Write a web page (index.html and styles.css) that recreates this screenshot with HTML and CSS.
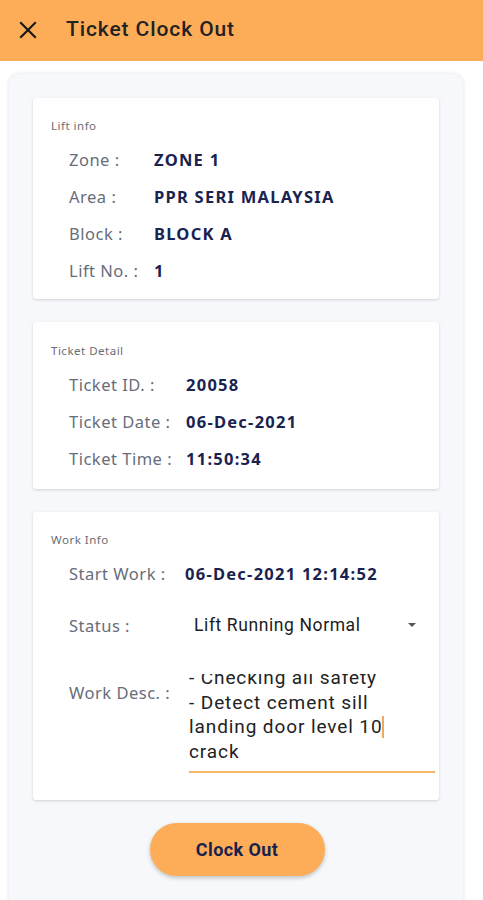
FILE: index.html
```html
<!DOCTYPE html>
<html>
<head>
<meta charset="utf-8">
<link rel="stylesheet" href="styles.css">
</head>
<body>
<header class="appbar">
  <svg class="close" width="18" height="18" viewBox="0 0 18 18"><path d="M2 2 L16 16 M16 2 L2 16" stroke="#1a1a1a" stroke-width="2.2" stroke-linecap="square" fill="none"/></svg>
  <span class="title">Ticket Clock Out</span>
</header>
<main class="sheet">
  <section class="card card-lift">
    <div class="card-label">Lift info</div>
    <div class="row"><span class="key">Zone :</span><span class="val">ZONE 1</span></div>
    <div class="row"><span class="key">Area :</span><span class="val">PPR SERI MALAYSIA</span></div>
    <div class="row"><span class="key">Block :</span><span class="val">BLOCK A</span></div>
    <div class="row"><span class="key">Lift No. :</span><span class="val">1</span></div>
  </section>
  <section class="card card-ticket">
    <div class="card-label">Ticket Detail</div>
    <div class="row"><span class="key">Ticket ID. :</span><span class="val">20058</span></div>
    <div class="row"><span class="key">Ticket Date :</span><span class="val">06-Dec-2021</span></div>
    <div class="row"><span class="key">Ticket Time :</span><span class="val">11:50:34</span></div>
  </section>
  <section class="card card-work">
    <div class="card-label">Work Info</div>
    <div class="row"><span class="key">Start Work :</span><span class="val">06-Dec-2021 12:14:52</span></div>
    <div class="row status-row">
      <span class="key">Status :</span>
      <div class="select"><span class="select-text">Lift Running Normal</span><span class="arrow"></span></div>
    </div>
    <div class="row desc-row">
      <span class="key">Work Desc. :</span>
      <div class="textarea">
        <div class="textarea-inner">- Checking all safety<br>- Detect cement sill<br>landing door level 10<span class="caret"></span><br>crack</div>
      </div>
    </div>
  </section>
  <div class="actions"><button class="btn">Clock Out</button></div>
</main>
</body>
</html>
```

FILE: styles.css
```css
html, body { margin: 0; padding: 0; background: #ffffff; }
body { width: 483px; height: 900px; overflow: hidden; font-family: "Noto Sans", "Open Sans", sans-serif; }

.appbar {
  height: 61px;
  background: #fdad58;
  display: flex;
  align-items: center;
  padding-left: 19px;
  box-sizing: border-box;
}
.close { display: block; margin-top: -1px; }
.title {
  margin-left: 29px;
  font-family: Roboto, sans-serif;
  font-weight: 500;
  font-size: 21px;
  letter-spacing: 0.9px;
  color: #222;
  margin-top: -3px;
}

.sheet {
  margin: 13px 20px 0 9px;
  background: #f6f8fb;
  border-radius: 10px 10px 0 0;
  box-shadow: 0 0 4px rgba(0,0,0,0.13);
  padding: 24px 24px 40px 24px;
  min-height: 800px;
  box-sizing: border-box;
}

.card {
  background: #ffffff;
  box-shadow: 0 1px 3px rgba(0,0,0,0.16);
  border-radius: 3px;
  padding: 21px 18px 10px 18px;
  margin-bottom: 23px;
}
.card-label {
  font-size: 11.5px;
  line-height: 14px;
  letter-spacing: 0.5px;
  color: #6a6d73;
  margin-bottom: 8px;
}
.row {
  display: flex;
  align-items: center;
  height: 37px;
  padding-left: 18px;
  font-size: 16.5px;
}
.key { color: #676d7b; width: 85px; flex: none; letter-spacing: 0.5px; white-space: nowrap; }
.val { color: #1a2350; font-weight: 700; letter-spacing: 1.25px; white-space: nowrap; }

.card-ticket { padding-top: 22px; padding-bottom: 12px; }
.card-ticket .key { width: 117px; }

.card-work { padding-top: 21px; padding-bottom: 27px; padding-right: 4px; }
.card-work .key { width: 116px; }
.status-row { height: 50px; margin-top: 8px; }
.select {
  flex: 1;
  display: flex;
  align-items: center;
  justify-content: space-between;
  padding-left: 9px;
  padding-right: 19px;
}
.select-text { font-family: Roboto, sans-serif; font-size: 17.5px; letter-spacing: 0.6px; color: #1c1c1c; }
.arrow {
  width: 0; height: 0;
  border-left: 4.5px solid transparent;
  border-right: 4.5px solid transparent;
  border-top: 4.5px solid #555;
}
.desc-row { height: auto; align-items: flex-start; margin-top: 24px; }
.desc-row .key { line-height: 37px; width: 120px; }
.textarea {
  flex: 1;
  height: 97px;
  overflow: hidden;
  border-bottom: 2px solid #f7b76a;
}
.textarea-inner {
  margin-top: -8px;
  font-family: Roboto, sans-serif;
  font-size: 19px;
  line-height: 24.7px;
  letter-spacing: 0.9px;
  color: #222;
  white-space: nowrap;
}
.caret {
  display: inline-block;
  width: 2px;
  height: 22px;
  background: #f5a855;
  vertical-align: -5px;
  margin-left: -1px;
}

.actions { display: flex; justify-content: center; padding-left: 2px; }
.btn {
  width: 175px;
  height: 53px;
  border: none;
  border-radius: 27px;
  background: #fdad58;
  box-shadow: 0 2px 4px rgba(0,0,0,0.22);
  font-family: Roboto, sans-serif;
  font-weight: 700;
  font-size: 18px;
  letter-spacing: 0.4px;
  color: #18224d;
  padding: 0;
}
```
